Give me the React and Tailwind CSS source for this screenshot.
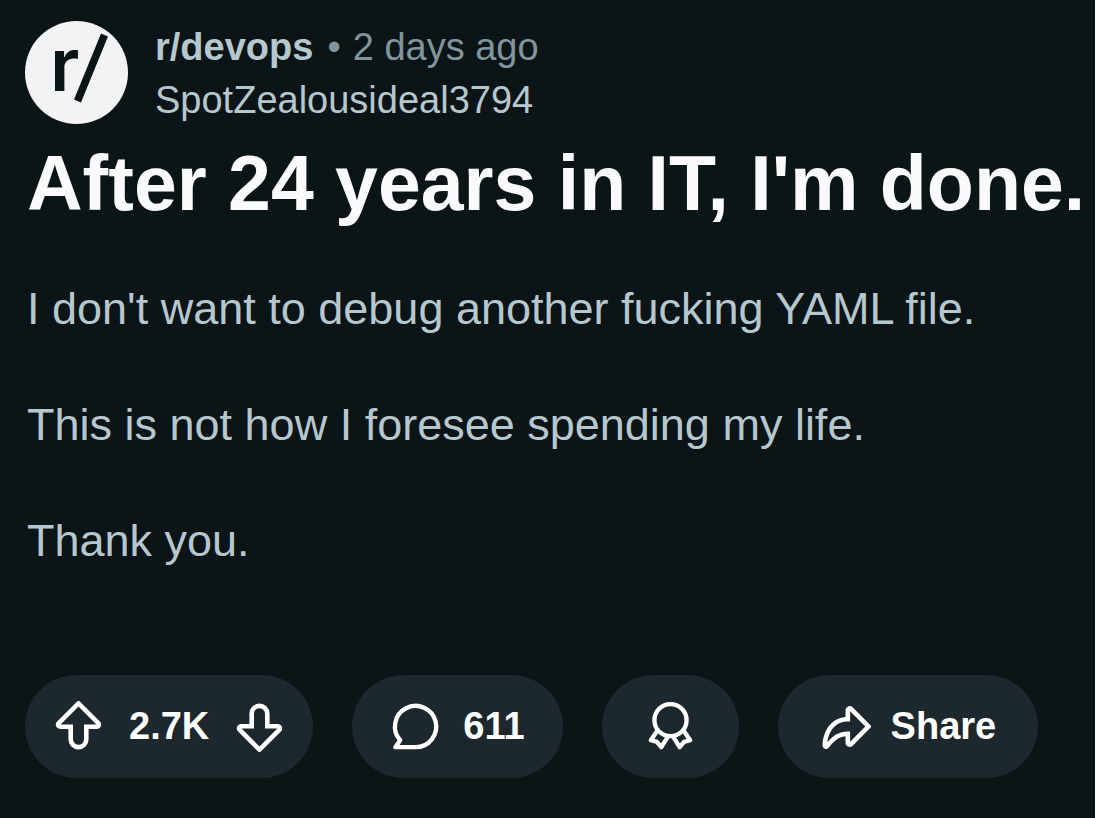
const icons = {
  up: "M10 19a3.966 3.966 0 01-3.96-3.962V10.98H2.838a1.731 1.731 0 01-1.605-1.073 1.734 1.734 0 01.377-1.895L9.364.254a.925.925 0 011.272 0l7.754 7.759c.498.499.646 1.242.376 1.894-.27.652-.901 1.073-1.605 1.073h-3.202v4.058A3.965 3.965 0 019.999 19H10zM2.989 9.179H7.84v5.731c0 1.13.81 2.163 1.934 2.278a2.163 2.163 0 002.386-2.15V9.179h4.851L10 2.163 2.989 9.179z",
  down: "M10 1a3.966 3.966 0 013.96 3.962V9.02h3.202c.706 0 1.335.42 1.605 1.073.27.652.122 1.396-.377 1.895l-7.754 7.759a.925.925 0 01-1.272 0l-7.754-7.76a1.734 1.734 0 01-.376-1.894c.27-.652.9-1.073 1.605-1.073h3.202V4.962A3.965 3.965 0 0110 1zm7.01 9.82h-4.85V5.09c0-1.13-.81-2.163-1.934-2.278a2.163 2.163 0 00-2.386 2.15v5.859H2.989l7.01 7.016 7.012-7.016z",
  share:
    "M12.8 17.524l6.89-6.887a.9.9 0 000-1.273L12.8 2.477a1.64 1.64 0 00-1.782-.349 1.64 1.64 0 00-1.014 1.518v2.593C4.054 6.728 1.192 12.075 1 17.376a1.353 1.353 0 00.862 1.32 1.35 1.35 0 001.531-.364l.334-.381c1.705-1.944 3.323-3.791 6.277-4.103v2.509c0 .667.398 1.262 1.014 1.518a1.638 1.638 0 001.783-.349v-.002zm-.994-1.548V12h-.9c-3.969 0-6.162 2.1-8.001 4.161.514-4.011 2.823-8.16 8-8.16h.9V4.024L17.784 10l-5.977 5.976z",
};

function Icon({ name }) {
  return (
    <svg viewBox="0 0 20 20" className="size-[51px] shrink-0" fill="currentColor" aria-hidden="true">
      <path d={icons[name]} />
    </svg>
  );
}

function LineIcon({ children }) {
  return (
    <svg
      viewBox="0 0 20 20"
      className="size-[51px] shrink-0"
      fill="none"
      stroke="currentColor"
      strokeWidth="1.7"
      strokeLinejoin="round"
      aria-hidden="true"
    >
      {children}
    </svg>
  );
}

function Avatar() {
  return (
    <svg viewBox="0 0 103 103" className="size-[103px] shrink-0" role="img" aria-label="r/devops">
      <circle cx="51.5" cy="51.5" r="51.5" fill="#f2f3f5" />
      <text x="25" y="70" fontSize="74" fontWeight="600" fontFamily="Inter, sans-serif" fill="#0b1416">
        r
      </text>
      <path d="M79.5 14L52.5 80" stroke="#0b1416" strokeWidth="7.5" />
    </svg>
  );
}

const pill = "flex h-[103px] items-center rounded-full bg-[#1c282d]";

export default function App() {
  return (
    <div className="min-h-screen bg-white pr-px font-['Liberation_Sans',Arial,sans-serif]">
      <main className="min-h-screen bg-[#0b1416] pt-[21px] pr-2 pb-10 pl-[25px]">
        <article>
          <header className="flex items-start gap-[27px]">
            <Avatar />
            <div className="text-[38px] leading-[53px] text-[#b7c7ce]">
              <div className="flex gap-[14px]">
                <a href="#community" className="font-bold">r/devops</a>
                <span className="flex gap-3 text-[#82959b]">
                  <span>•</span>
                  <time>2 days ago</time>
                </span>
              </div>
              <a href="#author" className="block">SpotZealousideal3794</a>
            </div>
          </header>

          <div className="pl-[2px]">
            <h1 className="mt-[14px] text-[77px] leading-[84px] font-bold text-[#f8fafb]">
              After 24 years in IT, I'm done.
            </h1>
            <div className="mt-[55px] flex flex-col gap-[58px] text-[45px] leading-[58px] text-[#b7c7ce]">
              <p>I don't want to debug another fucking YAML file.</p>
              <p>This is not how I foresee spending my life.</p>
              <p>Thank you.</p>
            </div>
          </div>

          <footer className="mt-[105px] flex gap-[39px] text-[38px] leading-[53px] font-bold text-white">
            <div className={`${pill} gap-[25px] px-7`}>
              <button type="button" aria-label="Upvote"><Icon name="up" /></button>
              <span>2.7K</span>
              <button type="button" aria-label="Downvote"><Icon name="down" /></button>
            </div>
            <button type="button" className={`${pill} gap-[22px] px-[38px]`}>
              <LineIcon>
                <path d="M10 18.1A8.1 8.1 0 1 0 4 15.4L2.1 18.1z" />
              </LineIcon>
              <span>611</span>
            </button>
            <button type="button" aria-label="Award" className={`${pill} px-[43px]`}>
              <LineIcon>
                <circle cx="10" cy="7.5" r="6.3" />
                <path d="M5 11.4L2.3 15.4L4.7 16L6.4 18.1L9.1 13.8" />
                <path d="M15 11.4L17.7 15.4L15.3 16L13.6 18.1L10.9 13.8" />
              </LineIcon>
            </button>
            <button type="button" className={`${pill} gap-[20px] px-[42px]`}>
              <Icon name="share" />
              <span>Share</span>
            </button>
          </footer>
        </article>
      </main>
    </div>
  );
}
